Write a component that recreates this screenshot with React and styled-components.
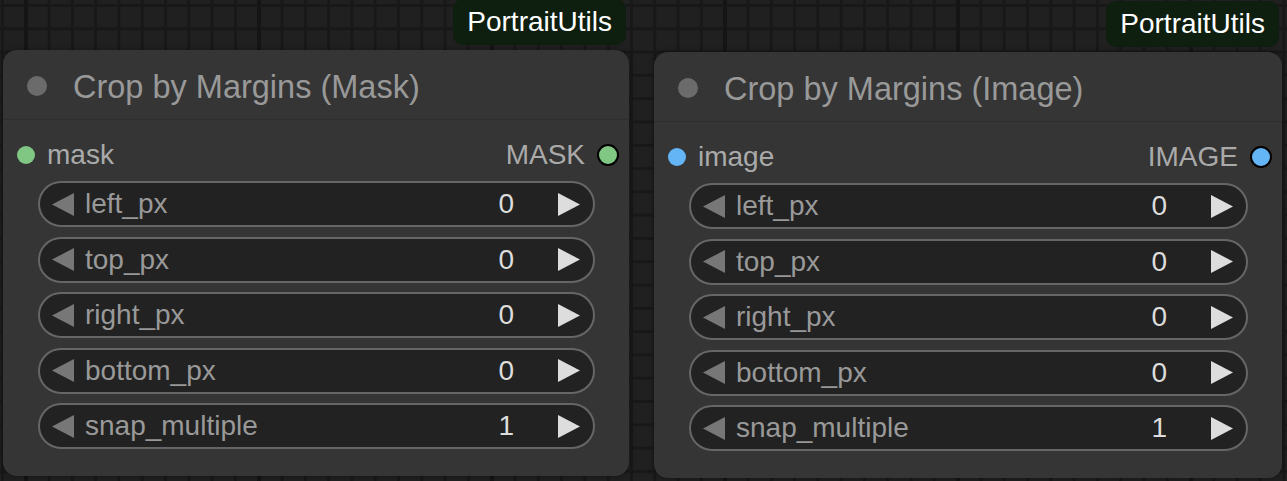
import React from "react";
import styled, { createGlobalStyle } from "styled-components";

const GlobalStyle = createGlobalStyle`
  html, body {
    margin: 0;
    padding: 0;
    background: #202020;
    overflow: hidden;
  }
  body {
    font-family: "Liberation Sans", Arial, sans-serif;
  }
`;

const nodes = [
  {
    id: "mask",
    x: 3,
    y: -1,
    width: 626,
    title: "Crop by Margins (Mask)",
    input: "mask",
    output: "MASK",
    color: "#81c784",
  },
  {
    id: "image",
    x: 654,
    y: 1,
    width: 628,
    title: "Crop by Margins (Image)",
    input: "image",
    output: "IMAGE",
    color: "#64b5f6",
  },
];

const widgets = [
  { name: "left_px", value: 0, min: true },
  { name: "top_px", value: 0, min: true },
  { name: "right_px", value: 0, min: true },
  { name: "bottom_px", value: 0, min: true },
  { name: "snap_multiple", value: 1, min: true },
];

function Triangle({ dir, off }) {
  const pts = dir === "left" ? "22,0 0,11.5 22,23" : "0,0 22,11.5 0,23";
  return (
    <ArrowSvg width="22" height="23" viewBox="0 0 22 23">
      <polygon points={pts} fill={off ? "#777" : "#ddd"} />
    </ArrowSvg>
  );
}

function Node({ node }) {
  return (
    <NodeWrap $x={node.x} $y={node.y} $w={node.width}>
      <Badge>PortraitUtils</Badge>
      <NodeBody>
        <Title>
          <TitleDot />
          <TitleText>{node.title}</TitleText>
        </Title>
        <SlotRow>
          <Slot>
            <SlotDot $color={node.color} />
            <SlotLabel>{node.input}</SlotLabel>
          </Slot>
          <Slot>
            <SlotLabel>{node.output}</SlotLabel>
            <SlotDot $color={node.color} $output />
          </Slot>
        </SlotRow>
        <WidgetList>
          {widgets.map((w) => (
            <Widget key={w.name}>
              <Triangle dir="left" off={w.min} />
              <WidgetLabel>{w.name}</WidgetLabel>
              <WidgetValue>{w.value}</WidgetValue>
              <Triangle dir="right" />
            </Widget>
          ))}
        </WidgetList>
      </NodeBody>
    </NodeWrap>
  );
}

export default function App() {
  return (
    <>
      <GlobalStyle />
      <Canvas>
        {nodes.map((n) => (
          <Node key={n.id} node={n} />
        ))}
      </Canvas>
    </>
  );
}

const Canvas = styled.div`
  position: relative;
  width: 1287px;
  height: 481px;
  overflow: hidden;
  background-color: #202020;
  background-image: linear-gradient(90deg, #151515 4px, transparent 4px),
    linear-gradient(90deg, #181818 3px, transparent 3px),
    linear-gradient(180deg, #181818 3px, transparent 3px);
  background-size: 233px 100%, 23.3px 23.3px, 23.3px 23.3px;
  background-position: 24px 0, 1px 0, 0 4px;
`;

const NodeWrap = styled.div`
  position: absolute;
  left: ${(p) => p.$x}px;
  top: ${(p) => p.$y}px;
  width: ${(p) => p.$w}px;
  display: flex;
  flex-direction: column;
`;

const Badge = styled.div`
  align-self: flex-end;
  margin-right: 3px;
  margin-bottom: 5px;
  height: 46px;
  padding: 0 14px;
  display: flex;
  align-items: center;
  background: #0e1e0f;
  border-radius: 10px;
  color: #fff;
  font-size: 28px;
`;

const NodeBody = styled.div`
  background: #353535;
  border-radius: 14px;
  padding-bottom: 27px;
  box-shadow: 0 0 6px rgba(0, 0, 0, 0.35);
`;

const Title = styled.div`
  box-sizing: border-box;
  height: 70px;
  display: flex;
  align-items: center;
  gap: 26px;
  padding: 2px 0 0 24px;
  border-bottom: 1px solid #2e2e2e;
`;

const TitleDot = styled.span`
  width: 20px;
  height: 20px;
  border-radius: 50%;
  background: #6b6b6b;
  flex: none;
`;

const TitleText = styled.span`
  padding-top: 3px;
  font-size: 32.5px;
  color: #999;
  white-space: nowrap;
`;

const SlotRow = styled.div`
  box-sizing: border-box;
  height: 61px;
  padding: 8px 10px 0 14px;
  display: flex;
  align-items: center;
  justify-content: space-between;
`;

const Slot = styled.div`
  display: flex;
  align-items: center;
  gap: 12px;
`;

const SlotDot = styled.span`
  box-sizing: border-box;
  width: ${(p) => (p.$output ? 22 : 18)}px;
  height: ${(p) => (p.$output ? 22 : 18)}px;
  border-radius: 50%;
  background: ${(p) => p.$color};
  border: ${(p) => (p.$output ? "2.5px solid #000" : "none")};
  flex: none;
`;

const SlotLabel = styled.span`
  font-size: 28px;
  color: #aaa;
`;

const WidgetList = styled.div`
  display: flex;
  flex-direction: column;
  gap: 9.5px;
  padding: 0 34px 0 35px;
`;

const Widget = styled.div`
  box-sizing: border-box;
  height: 46px;
  border: 2px solid #666;
  border-radius: 23px;
  background: #222;
  display: flex;
  align-items: center;
  padding: 0 13px 0 12px;
`;

const ArrowSvg = styled.svg`
  flex: none;
  display: block;
`;

const WidgetLabel = styled.span`
  flex: 1;
  margin-left: 11px;
  font-size: 28px;
  color: #999;
  white-space: nowrap;
`;

const WidgetValue = styled.span`
  font-size: 28px;
  color: #ddd;
  margin-right: 44px;
`;
